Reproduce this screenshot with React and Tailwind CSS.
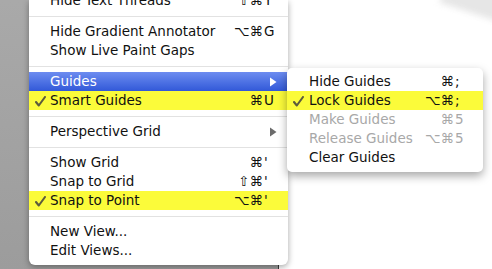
const font = { fontFamily: '"DejaVu Sans", "Liberation Sans", sans-serif' }

const mainItems = [
  { label: 'Hide Text Threads', mods: '⇧⌘', key: 'Y' },
  { sep: true },
  { label: 'Hide Gradient Annotator', mods: '⌥⌘', key: 'G' },
  { label: 'Show Live Paint Gaps' },
  { sep: true },
  { label: 'Guides', active: true, sub: true },
  { label: 'Smart Guides', mods: '⌘', key: 'U', checked: true, marked: true },
  { sep: true },
  { label: 'Perspective Grid', sub: true },
  { sep: true },
  { label: 'Show Grid', mods: '⌘', key: "'" },
  { label: 'Snap to Grid', mods: '⇧⌘', key: "'" },
  { label: 'Snap to Point', mods: '⌥⌘', key: "'", checked: true, marked: true },
  { sep: true },
  { label: 'New View...' },
  { label: 'Edit Views...' },
]

const guideItems = [
  { label: 'Hide Guides', mods: '⌘', key: ';' },
  { label: 'Lock Guides', mods: '⌥⌘', key: ';', checked: true, marked: true },
  { label: 'Make Guides', mods: '⌘', key: '5', disabled: true },
  { label: 'Release Guides', mods: '⌥⌘', key: '5', disabled: true },
  { label: 'Clear Guides' },
]

const Arrow = ({ white }) => (
  <svg width="8" height="10" viewBox="0 0 8 10">
    <path d="M1 0.5 L7.5 5 L1 9.5 Z" fill={white ? '#ffffff' : '#6b6b6b'} />
  </svg>
)

const Check = () => (
  <svg width="11" height="11" viewBox="0 0 11 11" className="absolute left-[6px] top-[5px]">
    <path d="M1 6 L3.8 9.5 L10 1" fill="none" stroke="#5c5c3c" strokeWidth="2.1" strokeLinecap="round" strokeLinejoin="round" />
  </svg>
)

const Row = ({ item, padLeft, padRight }) => {
  if (item.sep) {
    return (
      <div className="h-[12px] flex items-center">
        <div className="h-px w-full bg-[#e2e2e2]" />
      </div>
    )
  }
  const bg = item.active
    ? 'bg-gradient-to-b from-[#6d8cf0] to-[#3258d8] text-white'
    : item.marked
      ? 'bg-[#fbfb3a] text-[#111]'
      : item.disabled
        ? 'text-[#a8a8a8]'
        : 'text-[#111]'
  return (
    <div className={`h-[19px] flex items-center relative ${bg}`} style={{ paddingLeft: padLeft, paddingRight: padRight }}>
      {item.checked && <Check />}
      <span className="flex-1 whitespace-nowrap">{item.label}</span>
      {item.sub && (
        <span className="mr-[-2px]">
          <Arrow white={item.active} />
        </span>
      )}
      {item.mods && (
        <span className="flex whitespace-nowrap">
          <span className="text-right">{item.mods}</span>
          <span className="w-[12px] text-left pl-[1px]">{item.key}</span>
        </span>
      )}
    </div>
  )
}

export default function App() {
  return (
    <div className="w-[492px] h-[269px] relative overflow-hidden bg-white text-[13.5px] leading-none" style={font}>
      {/* backdrop */}
      <div className="flex h-full">
        <div className="w-[279px] h-full bg-gradient-to-b from-[#a9a9a9] to-[#9c9c9c] border-r border-[#3a3a3a]" />
        <div className="flex-1 relative">
          <div className="absolute right-[-20px] top-[-14px] w-[70px] h-[28px] bg-[#e6e6e6] rotate-[18deg] blur-[3px]" />
        </div>
      </div>

      {/* main menu */}
      <div className="absolute left-[29px] top-0 w-[259px] h-[265px] bg-white rounded-b-[6px] shadow-[0_2px_6px_rgba(0,0,0,0.35)] overflow-hidden">
        <div className="-mt-[9px]">
          {mainItems.map((item, i) => (
            <Row key={i} item={item} padLeft={21} padRight={13} />
          ))}
        </div>
      </div>

      {/* guides submenu */}
      <div className="absolute left-[287px] top-[68px] w-[196px] pt-[4px] pb-[5px] bg-white rounded-[5px] shadow-[0_4px_10px_rgba(0,0,0,0.35)] overflow-hidden">
        {guideItems.map((item, i) => (
          <Row key={i} item={item} padLeft={22} padRight={17} />
        ))}
      </div>
    </div>
  )
}
